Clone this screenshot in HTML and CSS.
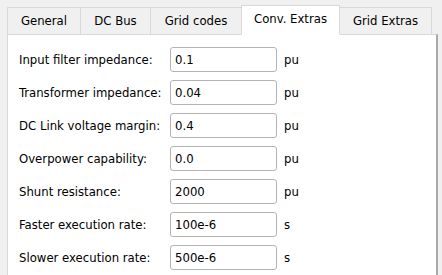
FILE: index.html
```html
<!DOCTYPE html>
<html lang="en">
<head>
    <meta charset="UTF-8">
    <title>Converter settings</title>
    <link rel="stylesheet" href="styles.css">
</head>
<body>
    <div class="tab-widget">
        <div class="tab-bar">
            <div class="tab tab-general">General</div>
            <div class="tab tab-dcbus">DC Bus</div>
            <div class="tab tab-grid">Grid codes</div>
            <div class="tab tab-conv active">Conv. Extras</div>
            <div class="tab tab-gridx">Grid Extras</div>
        </div>

        <div class="tab-panel">
            <div class="form-row">
                <label class="form-label">Input filter impedance:</label>
                <input class="form-input" type="text" value="0.1">
                <span class="unit">pu</span>
            </div>
            <div class="form-row">
                <label class="form-label">Transformer impedance:</label>
                <input class="form-input" type="text" value="0.04">
                <span class="unit">pu</span>
            </div>
            <div class="form-row">
                <label class="form-label">DC Link voltage margin:</label>
                <input class="form-input" type="text" value="0.4">
                <span class="unit">pu</span>
            </div>
            <div class="form-row">
                <label class="form-label">Overpower capability:</label>
                <input class="form-input" type="text" value="0.0">
                <span class="unit">pu</span>
            </div>
            <div class="form-row">
                <label class="form-label">Shunt resistance:</label>
                <input class="form-input" type="text" value="2000">
                <span class="unit">pu</span>
            </div>
            <div class="form-row">
                <label class="form-label">Faster execution rate:</label>
                <input class="form-input" type="text" value="100e-6">
                <span class="unit">s</span>
            </div>
            <div class="form-row">
                <label class="form-label">Slower execution rate:</label>
                <input class="form-input" type="text" value="500e-6">
                <span class="unit">s</span>
            </div>
        </div>
    </div>
</body>
</html>
```

FILE: styles.css
```css
* {
    margin: 0;
    padding: 0;
    box-sizing: border-box;
}

body {
    font-family: 'DejaVu Sans Condensed', 'Liberation Sans', Arial, sans-serif;
    font-size: 13px;
    color: #000000;
    background: #f0f0f0;
    width: 442px;
    height: 275px;
    overflow: hidden;
}

.tab-widget {
    padding: 5px 4px 0 7px;
    height: 100%;
    display: flex;
    flex-direction: column;
}

.tab-bar {
    display: flex;
    align-items: flex-end;
    height: 29px;
    position: relative;
    z-index: 1;
}

.tab {
    height: 28px;
    margin-bottom: -1px;
    border: 1px solid #d9d9d9;
    border-left: none;
    background: #f0f0f0;
    display: flex;
    align-items: center;
    justify-content: center;
    padding-bottom: 1px;
    white-space: nowrap;
}

.tab:first-child {
    border-left: 1px solid #d9d9d9;
}

.tab-general { width: 74px; }
.tab-dcbus { width: 70px; }
.tab-grid { width: 90px; border-right: none; }
.tab-conv { width: 99px; }
.tab-gridx { width: 92px; }

.tab.active {
    height: 30px;
    background: #ffffff;
    border: 1px solid #d9d9d9;
    border-bottom-color: #ffffff;
    padding-bottom: 3px;
}

.tab.active + .tab {
    border-left: none;
}

.tab-panel {
    flex: 1;
    background: #ffffff;
    border: 1px solid #d9d9d9;
    border-right: 2px solid #a9a9a9;
    border-bottom: none;
    padding: 12px 0 0 11px;
    display: flex;
    flex-direction: column;
    gap: 8px;
}

.form-row {
    display: flex;
    align-items: center;
    height: 25px;
}

.form-label {
    width: 151px;
}

.form-input {
    width: 107px;
    height: 25px;
    border: 1px solid #b4b4b4;
    border-radius: 3px;
    padding: 0 4px;
    font-family: inherit;
    font-size: 13px;
    color: #000000;
    background: #ffffff;
}

.unit {
    margin-left: 7px;
}
```
